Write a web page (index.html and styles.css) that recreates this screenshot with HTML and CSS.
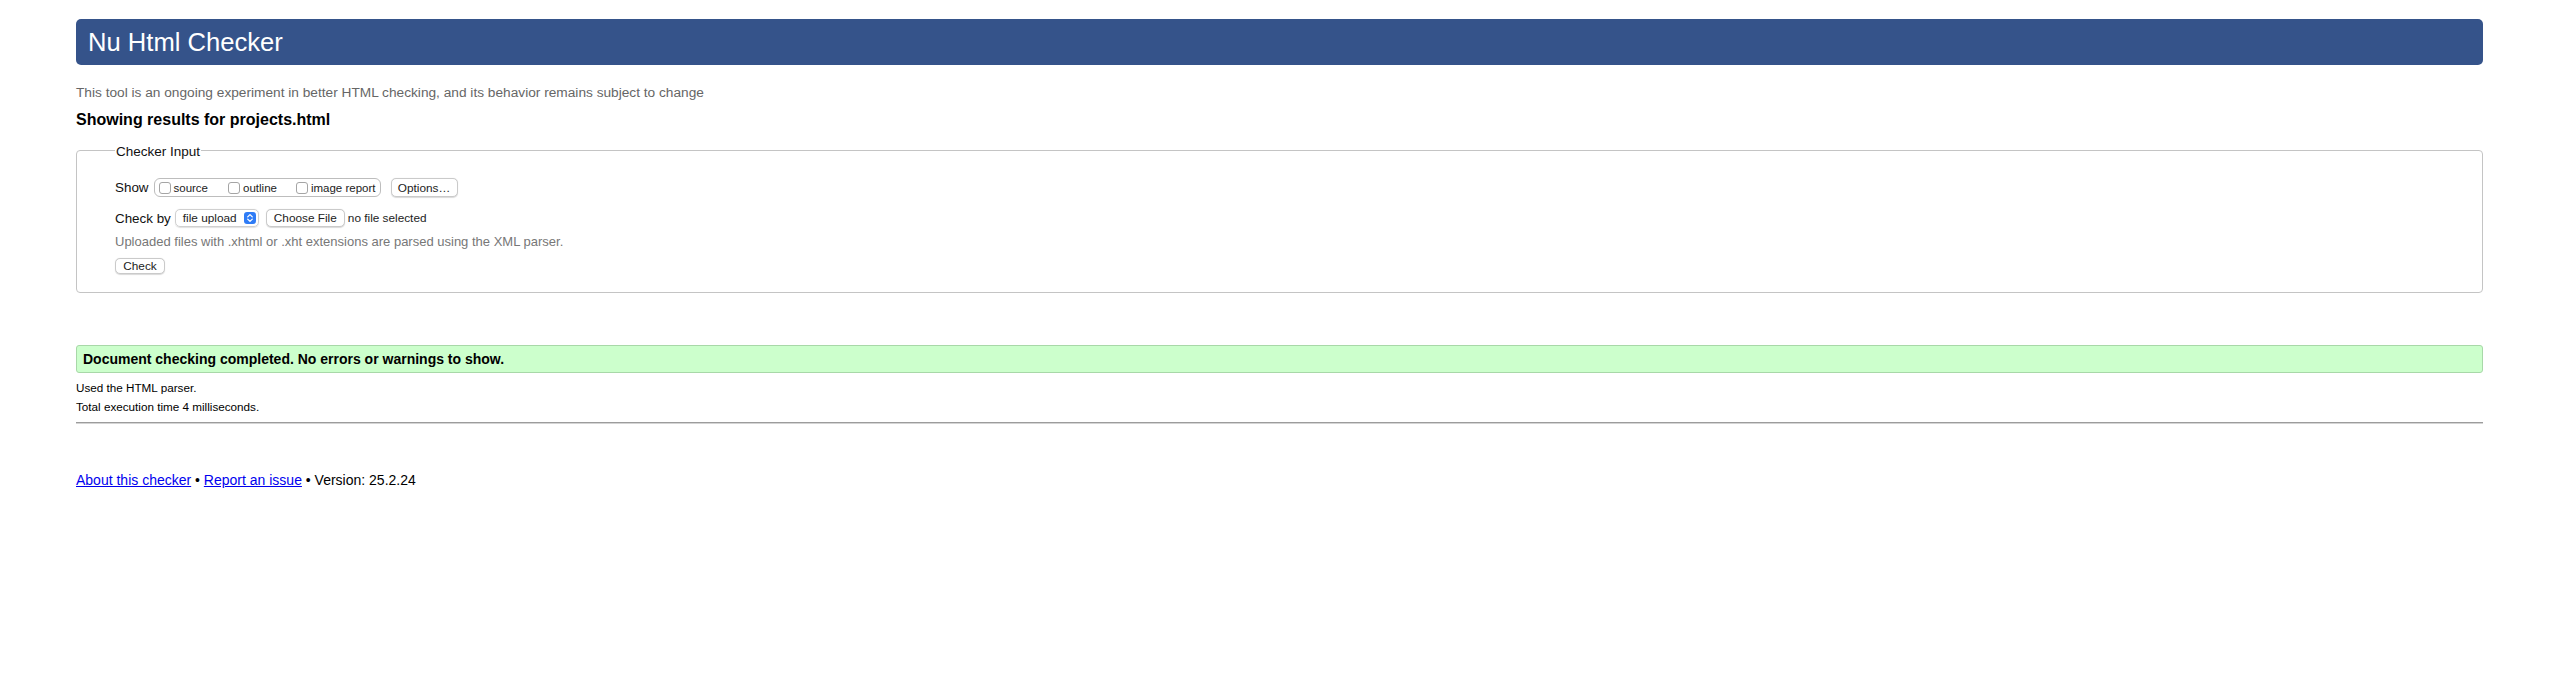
FILE: index.html
```html
<!DOCTYPE html>
<html lang="en">
<head>
<meta charset="utf-8">
<title>Showing results for projects.html - Nu Html Checker</title>
<link rel="stylesheet" href="styles.css">
</head>
<body>
<h1 class="masthead">Nu Html Checker</h1>
<p class="intro">This tool is an ongoing experiment in better HTML checking, and its behavior remains subject to change</p>
<h2 class="results-title">Showing results for projects.html</h2>
<form class="checker-form">
  <fieldset class="checker-input">
    <legend class="legend">Checker Input</legend>
    <div class="row row-show">
      <span class="row-label">Show</span>
      <span class="show-group">
        <label class="opt"><span class="cb"></span>source</label>
        <label class="opt"><span class="cb"></span>outline</label>
        <label class="opt"><span class="cb"></span>image report</label>
      </span>
      <span class="btn btn-options">Options…</span>
    </div>
    <div class="row row-by">
      <span class="row-label">Check by</span>
      <span class="select">file upload<span class="stepper"><svg width="8" height="10" viewBox="0 0 8 10"><path d="M1.7 3.9 L4 1.6 L6.3 3.9 M1.7 6.1 L4 8.4 L6.3 6.1" fill="none" stroke="#fff" stroke-width="1.3" stroke-linecap="round" stroke-linejoin="round"/></svg></span></span>
      <span class="btn btn-file">Choose File</span>
      <span class="nofile">no file selected</span>
    </div>
    <p class="hint">Uploaded files with .xhtml or .xht extensions are parsed using the XML parser.</p>
    <div class="row row-submit"><span class="btn btn-check">Check</span></div>
  </fieldset>
</form>
<p class="success">Document checking completed. No errors or warnings to show.</p>
<p class="details details-first">Used the HTML parser.</p>
<p class="details">Total execution time 4 milliseconds.</p>
<hr class="divider">
<p class="footer"><a href="#">About this checker</a> • <a href="#">Report an issue</a> • Version: 25.2.24</p>
</body>
</html>
```
FILE: styles.css
```css
html, body {
  background: #fff;
}
body {
  margin: 0;
  padding: 19px 67px 0 76px;
  font-family: "Liberation Sans", Arial, sans-serif;
  color: #000;
}
.masthead {
  margin: 0;
  height: 46px;
  line-height: 46px;
  padding: 0 12px;
  background: #35538a;
  color: #fff;
  font-size: 25.6px;
  font-weight: normal;
  border-radius: 5px;
}
.intro {
  margin: 20px 0 0;
  font-size: 13.7px;
  line-height: 16px;
  color: #666;
}
.results-title {
  margin: 10px 0 0;
  font-size: 16px;
  line-height: 18px;
  font-weight: bold;
}
.checker-form {
  margin: 11.5px 0 0;
}
.checker-input {
  margin: 0;
  padding: 0 38px 18px;
  border: 1px solid #c4c4c4;
  border-radius: 4px;
  font-size: 13px;
}
.legend {
  padding: 3px 1px 0;
  font-size: 13.5px;
  line-height: 16px;
  color: #111;
}
.row {
  display: flex;
  align-items: center;
  white-space: nowrap;
}
.row-show {
  height: 19px;
  margin-top: 18.5px;
}
.row-by {
  height: 18px;
  margin-top: 12px;
}
.row-label {
  font-size: 13.4px;
  color: #111;
}
.row-show .row-label {
  margin-right: 5px;
}
.row-by .row-label {
  margin-right: 4px;
}
.show-group {
  display: flex;
  align-items: center;
  box-sizing: border-box;
  width: 227px;
  height: 19px;
  padding: 0 0 0 4px;
  border: 1px solid #bdbdbd;
  border-radius: 6px;
  margin-right: 10px;
}
.opt {
  display: flex;
  align-items: center;
  margin-right: 20px;
  font-size: 11.5px;
  color: #222;
}
.opt:nth-child(2) {
  margin-right: 19px;
}
.opt:last-child {
  margin-right: 0;
}
.cb {
  box-sizing: border-box;
  width: 12px;
  height: 12px;
  border: 1px solid #a5a5a5;
  border-radius: 3px;
  margin-right: 3px;
  background: #fff;
}
.btn {
  display: inline-flex;
  align-items: center;
  justify-content: center;
  box-sizing: border-box;
  height: 19px;
  border: 1px solid #cacaca;
  border-radius: 5px;
  background: #fff;
  font-size: 11.8px;
  color: #222;
  box-shadow: 0 0.5px 1px rgba(0,0,0,0.15);
}
.btn-options {
  width: 67px;
}
.select {
  display: inline-flex;
  align-items: center;
  justify-content: space-between;
  box-sizing: border-box;
  width: 84px;
  height: 18px;
  padding: 0 2px 0 7px;
  border: 1px solid #d0d0d0;
  border-radius: 5px;
  font-size: 11.8px;
  color: #222;
  margin-right: 7px;
  box-shadow: 0 0.5px 1px rgba(0,0,0,0.12);
}
.stepper {
  display: inline-flex;
  align-items: center;
  justify-content: center;
  width: 12px;
  height: 12px;
  border-radius: 3px;
  background: #2f7cf6;
}
.btn-file {
  width: 79px;
  height: 18px;
  margin-right: 3px;
}
.nofile {
  font-size: 11.8px;
  color: #222;
}
.hint {
  margin: 7px 0 0;
  font-size: 13px;
  line-height: 16px;
  color: #777;
}
.row-submit {
  height: 16px;
  margin-top: 8px;
}
.btn-check {
  width: 50px;
  height: 16px;
}
.success {
  margin: 52px 0 0;
  height: 26px;
  line-height: 26px;
  padding: 0 6px;
  background: #ccffcc;
  border: 1px solid #a8d8a8;
  border-radius: 3px;
  font-size: 14px;
  font-weight: bold;
}
.details {
  margin: 5px 0 0;
  font-size: 11.7px;
  line-height: 14px;
}
.details-first {
  margin-top: 8px;
}
.divider {
  margin: 8px 0 0;
  height: 0;
  border: 0;
  border-top: 1px solid #9c9c9c;
  border-bottom: 1px solid #d4d4d4;
}
.footer {
  margin: 48px 0 0;
  font-size: 14px;
  line-height: 16px;
}
.footer a {
  color: #0000ee;
}
```
